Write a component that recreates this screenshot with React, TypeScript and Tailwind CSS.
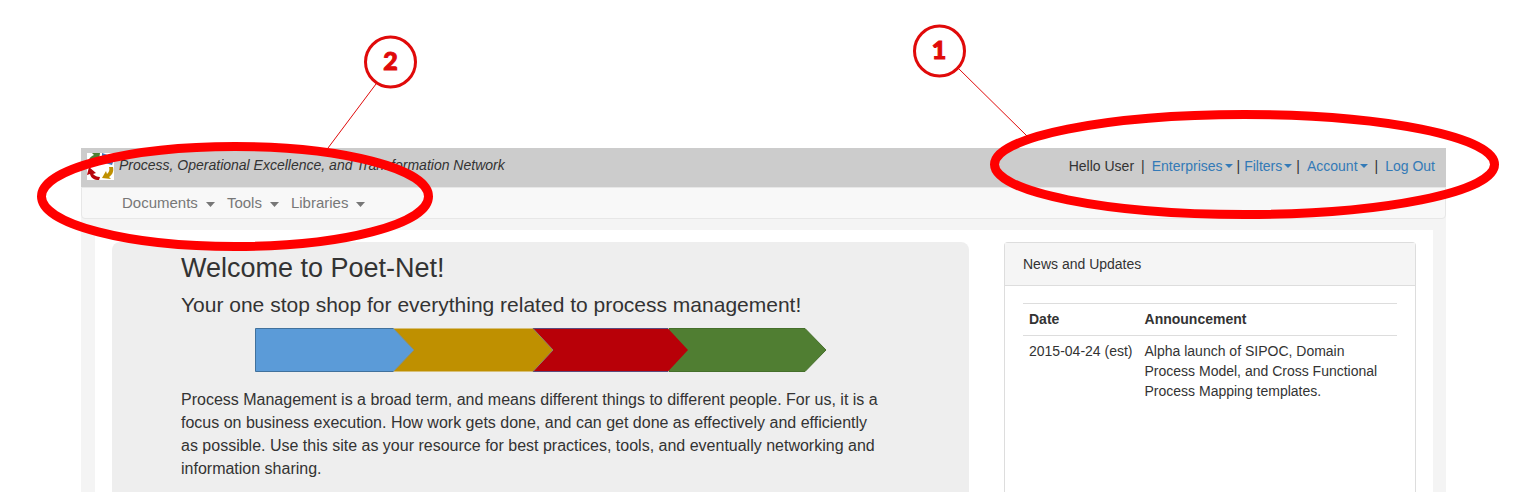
import React from "react";

const announcements = [
  {
    date: "2015-04-24 (est)",
    text: "Alpha launch of SIPOC, Domain Process Model, and Cross Functional Process Mapping templates.",
  },
];

const Caret = ({ className = "h-1 w-2" }: { className?: string }) => (
  <svg className={className} viewBox="0 0 8 4" preserveAspectRatio="none" fill="currentColor" aria-hidden="true">
    <path d="M0 0h8L4 4z" />
  </svg>
);

const Logo = () => (
  <svg width="27" height="27" viewBox="0 0 27 27" role="img" aria-label="Poet-Net">
    <rect width="27" height="27" fill="#fff" />
    <path d="M1 11C1 6 4 3 7 2L5 0h8l-1 7-2-2C7 6 6 8 5 9z" fill="#4f7f33" />
    <path d="M15 0l3 1c4 1 6 3 7 6l2-1-2 6-7-2 3-1c-1-3-3-4-6-5z" fill="#4472b8" />
    <path d="M2 14l7 6-3 1c2 2 4 3 7 3l-1 3C7 27 4 25 3 21l-3 1z" fill="#b8050c" />
    <path d="M22 14h4c1 5-1 8-4 10l2 2-9-1 4-7 1 3c2-2 3-4 2-7z" fill="#bf9000" />
  </svg>
);

const Steps = () => (
  <svg
    className="ml-[74px] mt-[11px] max-w-full"
    width="572"
    height="44"
    viewBox="0 0 572 44"
    role="img"
    aria-label="Process steps"
  >
    <path d="M414 .5h136L571 22 550 43.5H414z" fill="#507e32" stroke="#456f2b" />
    <path d="M278 .5h135L433 22 413 43.5H278z" fill="#b80008" />
    <path d="M278 .5h135M278 43.5h135" stroke="#5b4a7c" />
    <path d="M139 .5h139L298 22 278 43.5H139z" fill="#bf9000" />
    <path d="M278 .5L298 22 278 43.5" fill="none" stroke="#8c8570" />
    <path d="M.5 .5h138L159 22l-20.500 21.500H.5z" fill="#5b9bd8" />
    <path d="M138.500 .5H.5v43h138" fill="none" stroke="#41719c" />
    <path d="M138.500 .5L159 22l-20.500 21.500" fill="none" stroke="#8a9078" />
  </svg>
);

const NavMenu = ({ label }: { label: string }) => (
  <button type="button" className="flex items-center gap-2 text-[15px] leading-5 text-[#777]">
    {label}
    <span className="pt-0.5">
      <Caret className="h-[5px] w-[9px]" />
    </span>
  </button>
);

const UserMenu = ({ label }: { label: string }) => (
  <button type="button" className="flex items-center gap-0.5 text-[#337ab7]">
    {label}
    <Caret />
  </button>
);

// Numbered callouts that sit on top of the page
const Callouts = () => (
  <>
    <svg
      className="pointer-events-none absolute left-0 top-0"
      width="450"
      height="260"
      viewBox="0 0 450 260"
      fill="none"
    >
      <ellipse cx="235" cy="196.500" rx="193.500" ry="50" stroke="#f00" strokeWidth="9" />
      <path d="M376 84L328 148" stroke="#e00a0a" />
      <circle cx="390.500" cy="62" r="25" fill="#fff" stroke="#e00a0a" strokeWidth="3" />
      <text
        x="390.500"
        y="70"
        textAnchor="middle"
        fill="#e00a0a"
        stroke="#e00a0a"
        className="font-[Lato,sans-serif] text-[25px] font-black"
      >
        2
      </text>
    </svg>
    <svg
      className="pointer-events-none absolute right-0 top-0"
      width="640"
      height="230"
      viewBox="900 0 640 230"
      fill="none"
    >
      <ellipse cx="1244.500" cy="164.500" rx="250" ry="50" stroke="#f00" strokeWidth="9" />
      <path d="M958 68L1027 136" stroke="#e00a0a" />
      <circle cx="939.500" cy="51" r="25" fill="#fff" stroke="#e00a0a" strokeWidth="3" />
      <text
        x="939"
        y="59"
        textAnchor="middle"
        fill="#e00a0a"
        stroke="#e00a0a"
        className="font-[Lato,sans-serif] text-[25px] font-black"
      >
        1
      </text>
    </svg>
  </>
);

const App = () => {
  return (
    <div className="relative flex min-h-screen flex-col bg-white pl-[81px] pr-[94px] pt-[148px] font-['Liberation_Sans',Arial,sans-serif] text-sm text-[#333]">
      <div className="flex flex-1 flex-col bg-[#f4f4f4]">
        <header className="flex h-[39px] items-start justify-between bg-[#ccc] pl-1.5 pr-[11px]">
          <div className="flex gap-[5px] pt-[5px]">
            <Logo />
            <em className="pt-0.5 leading-5">
              Process, Operational Excellence, and Transformation Network
            </em>
          </div>
          <div className="flex gap-1 pt-2 leading-5">
            <span className="pr-[3px]">Hello User</span>
            <span className="pr-[3px]">|</span>
            <UserMenu label="Enterprises" />
            <span>|</span>
            <UserMenu label="Filters" />
            <span className="pr-[3px]">|</span>
            <UserMenu label="Account" />
            <span className="px-[3px]">|</span>
            <a href="#logout" className="text-[#337ab7]">
              Log Out
            </a>
          </div>
        </header>
        <nav className="flex h-8 items-center gap-3 rounded-b border border-[#e7e7e7] bg-[#f8f8f8] pl-10">
          <NavMenu label="Documents" />
          <NavMenu label="Tools" />
          <NavMenu label="Libraries" />
        </nav>
        <div className="ml-3.5 mr-[13px] mt-[11px] flex flex-1 gap-[35px] bg-white px-[17px] pt-3">
          <main className="min-w-0 flex-1 rounded-t-lg bg-[#eee] px-[69px] pt-[11px]">
            <h1 className="text-[27px] leading-[30px]">Welcome to Poet-Net!</h1>
            <h2 className="mt-2.5 text-[21px] leading-6">
              Your one stop shop for everything related to process management!
            </h2>
            <Steps />
            <p className="mt-4 pr-5 text-base leading-[23px]">
              Process Management is a broad term, and means different things to
              different people. For us, it is a focus on business execution. How
              work gets done, and can get done as effectively and efficiently as
              possible. Use this site as your resource for best practices,
              tools, and eventually networking and information sharing.
            </p>
          </main>
          <aside className="w-[412px] shrink-0 rounded-t border border-b-0 border-[#ddd]">
            <h3 className="border-b border-[#ddd] bg-[#f5f5f5] px-[18px] py-[11px] leading-5">
              News and Updates
            </h3>
            <div className="px-[18px] py-[17px]">
              <table className="w-full border-t border-[#ddd] text-left leading-5">
                <thead>
                  <tr>
                    <th className="w-[115px] whitespace-nowrap px-1.5 pb-1.5 pt-[5px]">Date</th>
                    <th className="px-1.5 pb-1.5 pt-[5px]">Announcement</th>
                  </tr>
                </thead>
                <tbody>
                  {announcements.map((item) => (
                    <tr key={item.date} className="border-t border-[#ddd] align-top">
                      <td className="whitespace-nowrap px-1.5 py-[5px]">{item.date}</td>
                      <td className="px-1.5 py-[5px]">{item.text}</td>
                    </tr>
                  ))}
                </tbody>
              </table>
            </div>
          </aside>
        </div>
      </div>
      <Callouts />
    </div>
  );
};

export default App;
